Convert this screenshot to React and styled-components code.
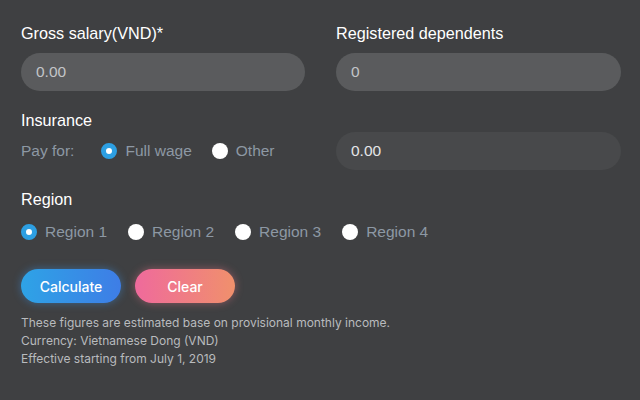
import React, { useState } from 'react'
import styled, { createGlobalStyle } from 'styled-components'

const Global = createGlobalStyle`
  html, body {
    margin: 0;
    background: #3f4042;
  }
  body {
    font-family: "Inter", "Liberation Sans", sans-serif;
  }
`

const Page = styled.div`
  width: 640px;
  height: 400px;
  box-sizing: border-box;
  padding: 23px 19px 0 21px;
  background: #3f4042;
  color: #fff;
`

const Grid = styled.div`
  display: grid;
  grid-template-columns: 284px 285px;
  column-gap: 31px;
`

const Field = styled.div`
  display: flex;
  flex-direction: column;
`

const Label = styled.div`
  font-family: "Liberation Sans", Arial, sans-serif;
  font-size: 16.2px;
  line-height: 20px;
  color: #fff;
  margin-bottom: ${p => p.$gap || 10}px;
`

const Input = styled.div`
  height: 38px;
  border-radius: 19px;
  background: ${p => (p.$dim ? '#48494b' : '#5a5b5d')};
  color: ${p => (p.$dim ? '#e4e5e7' : '#c3c5c8')};
  font-family: "Liberation Sans", Arial, sans-serif;
  font-size: 15.5px;
  display: flex;
  align-items: center;
  padding: 0 15px;
`

const RadioRow = styled.div`
  display: flex;
  align-items: center;
  height: 38px;
  font-family: "Liberation Sans", Arial, sans-serif;
  font-size: 15.5px;
  color: #8d98a4;
`

const PayFor = styled.span`
  margin-right: 27px;
`

const Option = styled.label`
  display: flex;
  align-items: center;
  margin-right: ${p => p.$gap}px;
  cursor: pointer;
`

const Dot = styled.span`
  width: 16px;
  height: 16px;
  border-radius: 50%;
  box-sizing: border-box;
  margin-right: 8px;
  background: #fff;
  border: ${p => (p.$on ? '5px solid #2d9fe2' : 'none')};
`

const Section = styled.div`
  margin-top: ${p => p.$top}px;
`

const Buttons = styled.div`
  display: flex;
  gap: 14px;
  margin-top: 18px;
`

const Button = styled.button`
  width: 100px;
  height: 34px;
  border: none;
  border-radius: 17px;
  color: #fff;
  font-family: "Inter", "Liberation Sans", sans-serif;
  font-size: 14px;
  font-weight: 500;
  background: ${p =>
    p.$kind === 'clear'
      ? 'linear-gradient(90deg, #ef6a9c, #f0906c)'
      : 'linear-gradient(90deg, #2ea3e6, #3e7de6)'};
  box-shadow: 0 0 8px
    ${p => (p.$kind === 'clear' ? 'rgba(240, 120, 140, 0.45)' : 'rgba(60, 150, 240, 0.45)')};
`

const Notes = styled.div`
  margin-top: 11px;
  font-family: "Inter", "Liberation Sans", sans-serif;
  font-size: 12px;
  line-height: 18px;
  color: #b9bbbe;
`

function Radio({ on, label, gap, onClick }) {
  return (
    <Option $gap={gap} onClick={onClick}>
      <Dot $on={on} />
      {label}
    </Option>
  )
}

export default function App() {
  const [pay, setPay] = useState('full')
  const [region, setRegion] = useState(1)

  return (
    <Page>
      <Global />
      <Grid>
        <Field>
          <Label>Gross salary(VND)*</Label>
          <Input>0.00</Input>
        </Field>
        <Field>
          <Label>Registered dependents</Label>
          <Input>0</Input>
        </Field>
      </Grid>

      <Section $top={19}>
        <Label $gap={2}>Insurance</Label>
        <Grid>
          <RadioRow>
            <PayFor>Pay for:</PayFor>
            <Radio on={pay === 'full'} label="Full wage" gap={20} onClick={() => setPay('full')} />
            <Radio on={pay === 'other'} label="Other" gap={0} onClick={() => setPay('other')} />
          </RadioRow>
          <Input $dim>0.00</Input>
        </Grid>
      </Section>

      <Section $top={19}>
        <Label $gap={4}>Region</Label>
        <RadioRow>
          {[1, 2, 3, 4].map(n => (
            <Radio
              key={n}
              on={region === n}
              label={`Region ${n}`}
              gap={21}
              onClick={() => setRegion(n)}
            />
          ))}
        </RadioRow>
      </Section>

      <Buttons>
        <Button>Calculate</Button>
        <Button $kind="clear">Clear</Button>
      </Buttons>

      <Notes>
        These figures are estimated base on provisional monthly income.
        <br />
        Currency: Vietnamese Dong (VND)
        <br />
        Effective starting from July 1, 2019
      </Notes>
    </Page>
  )
}
